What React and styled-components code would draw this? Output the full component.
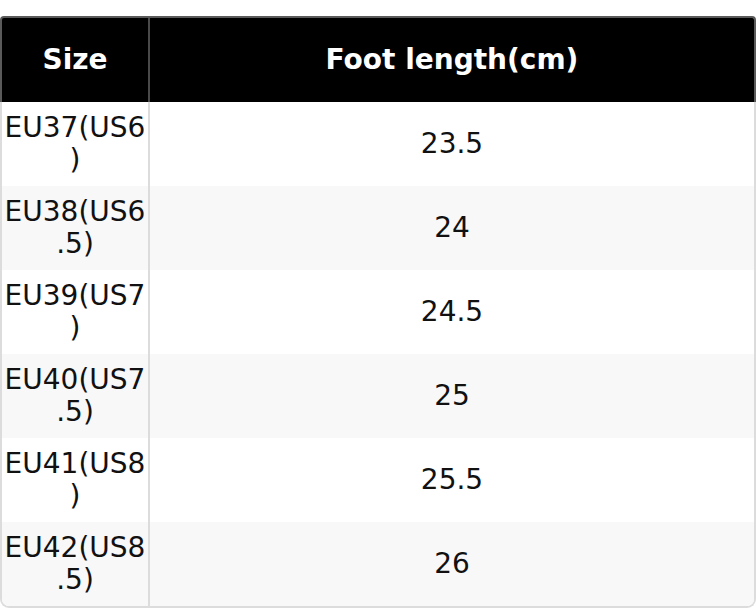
import React from "react";
import styled, { createGlobalStyle } from "styled-components";

const Global = createGlobalStyle`
  html, body { margin: 0; padding: 0; background: #fff; }
  body { font-family: "DejaVu Sans", "Liberation Sans", sans-serif; }
`;

const Table = styled.div`
  margin-top: 16px;
  width: 756px;
  box-sizing: border-box;
`;

const HeaderRow = styled.div`
  display: grid;
  grid-template-columns: 146px 1fr;
  background: #000;
  border: 2px solid #5a5a5a;
  border-bottom: none;
  border-radius: 4px 4px 0 0;
`;

const HeaderCell = styled.div`
  height: 84px;
  padding-bottom: 2px;
  box-sizing: border-box;
  display: flex;
  align-items: center;
  justify-content: center;
  color: #fff;
  font-weight: bold;
  font-size: 28px;
  border-left: ${(p) => (p.$divider ? "2px solid #4a4a4a" : "none")};
`;

const Body = styled.div`
  border: 2px solid #dcdcdc;
  border-top: none;
  border-radius: 0 0 9px 9px;
  overflow: hidden;
`;

const Row = styled.div`
  display: grid;
  grid-template-columns: 146px 1fr;
  background: ${(p) => (p.$alt ? "#f8f8f8" : "#fff")};
`;

const Cell = styled.div`
  height: 84px;
  box-sizing: border-box;
  padding: 0;
  display: flex;
  align-items: center;
  justify-content: center;
  text-align: center;
  color: #111;
  font-size: 28px;
  line-height: 32px;
  overflow-wrap: anywhere;
  border-left: ${(p) => (p.$divider ? "2px solid #dcdcdc" : "none")};
`;

const rows = [
  ["EU37(US6)", "23.5"],
  ["EU38(US6.5)", "24"],
  ["EU39(US7)", "24.5"],
  ["EU40(US7.5)", "25"],
  ["EU41(US8)", "25.5"],
  ["EU42(US8.5)", "26"],
];

export default function App() {
  return (
    <>
      <Global />
      <Table>
        <HeaderRow>
          <HeaderCell>Size</HeaderCell>
          <HeaderCell $divider>Foot length(cm)</HeaderCell>
        </HeaderRow>
        <Body>
          {rows.map(([s, l], i) => (
            <Row key={s} $alt={i % 2 === 1}>
              <Cell>{s}</Cell>
              <Cell $divider>{l}</Cell>
            </Row>
          ))}
        </Body>
      </Table>
    </>
  );
}
